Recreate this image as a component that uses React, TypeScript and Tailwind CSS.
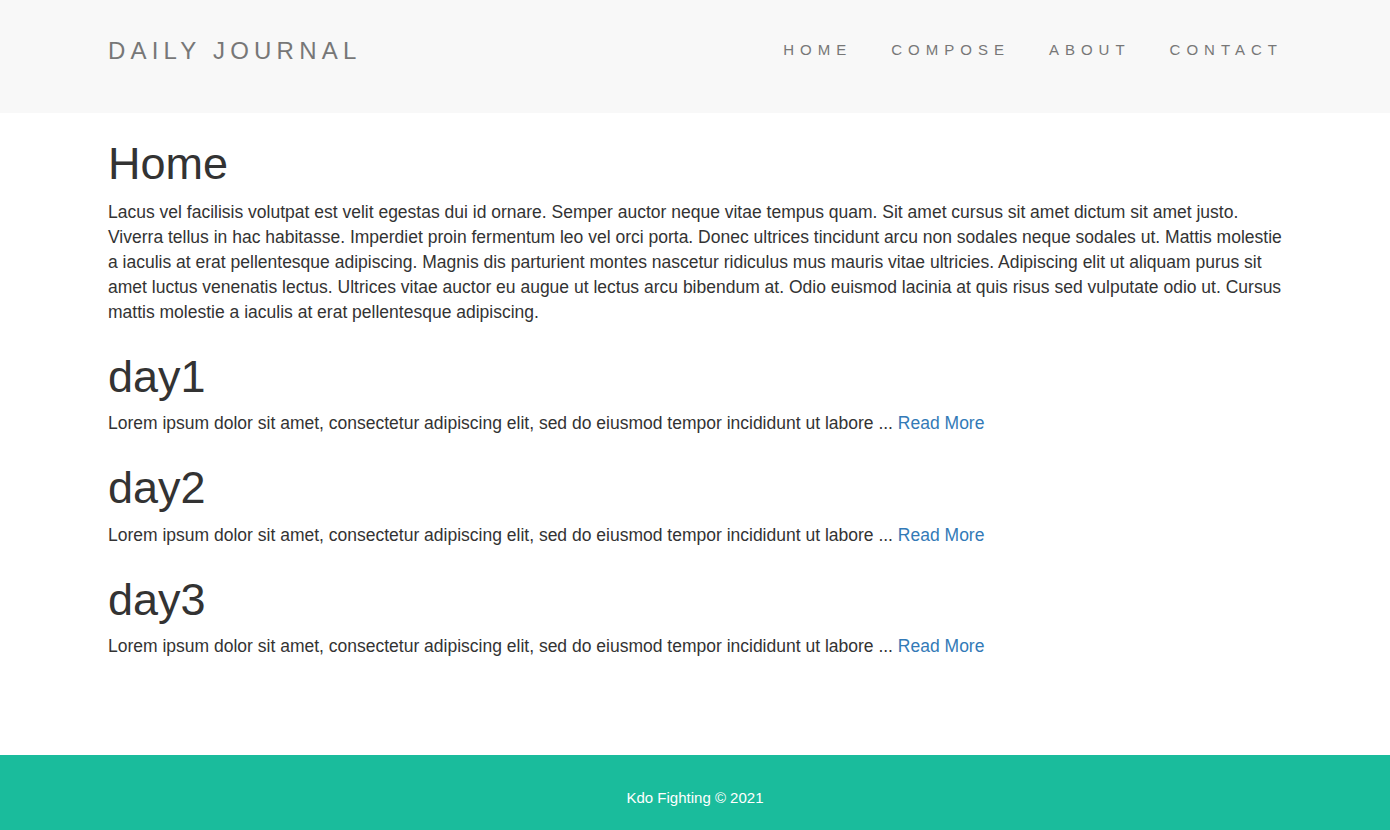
const homeText =
  "Lacus vel facilisis volutpat est velit egestas dui id ornare. Semper auctor neque vitae tempus quam. Sit amet cursus sit amet dictum sit amet justo. Viverra tellus in hac habitasse. Imperdiet proin fermentum leo vel orci porta. Donec ultrices tincidunt arcu non sodales neque sodales ut. Mattis molestie a iaculis at erat pellentesque adipiscing. Magnis dis parturient montes nascetur ridiculus mus mauris vitae ultricies. Adipiscing elit ut aliquam purus sit amet luctus venenatis lectus. Ultrices vitae auctor eu augue ut lectus arcu bibendum at. Odio euismod lacinia at quis risus sed vulputate odio ut. Cursus mattis molestie a iaculis at erat pellentesque adipiscing.";

const posts = ["day1", "day2", "day3"];
const excerpt =
  "Lorem ipsum dolor sit amet, consectetur adipiscing elit, sed do eiusmod tempor incididunt ut labore ...";

const navLinks = ["HOME", "COMPOSE", "ABOUT", "CONTACT"];

export default function App() {
  return (
    <div className="min-h-screen flex flex-col bg-white font-['Liberation_Sans',Arial,sans-serif] text-[#333]">
      {/* Navbar */}
      <header className="h-[113px] bg-[#f8f8f8]">
        <div className="h-full px-[108px] pb-[12px] flex items-center justify-between">
          <a href="#" className="text-[24px] tracking-[5.2px] text-[#777]">
            DAILY JOURNAL
          </a>
          <nav className="flex gap-[39px] mr-[-1px]">
            {navLinks.map((link) => (
              <a key={link} href="#" className="text-[15px] tracking-[6px] text-[#777]">
                {link}
              </a>
            ))}
          </nav>
        </div>
      </header>

      {/* Content */}
      <main className="px-[108px]">
        <h1 className="text-[45px] leading-[1.1] mt-[26px] mb-[11px]">Home</h1>
        <p className="text-[17.5px] leading-[25px]">{homeText}</p>

        {posts.map((title) => (
          <div key={title}>
            <h1 className="text-[45px] leading-[1.1] mt-[27px] mb-[10px]">{title}</h1>
            <p className="text-[17.5px] leading-[25px]">
              {excerpt}{" "}
              <a href="#" className="text-[#337ab7]">
                Read More
              </a>
            </p>
          </div>
        ))}
      </main>

      {/* Footer */}
      <footer className="mt-auto h-[75px] bg-[#1abc9c] flex items-center justify-center pt-[12px]">
        <p className="text-[15px] text-white">Kdo Fighting © 2021</p>
      </footer>
    </div>
  );
}
